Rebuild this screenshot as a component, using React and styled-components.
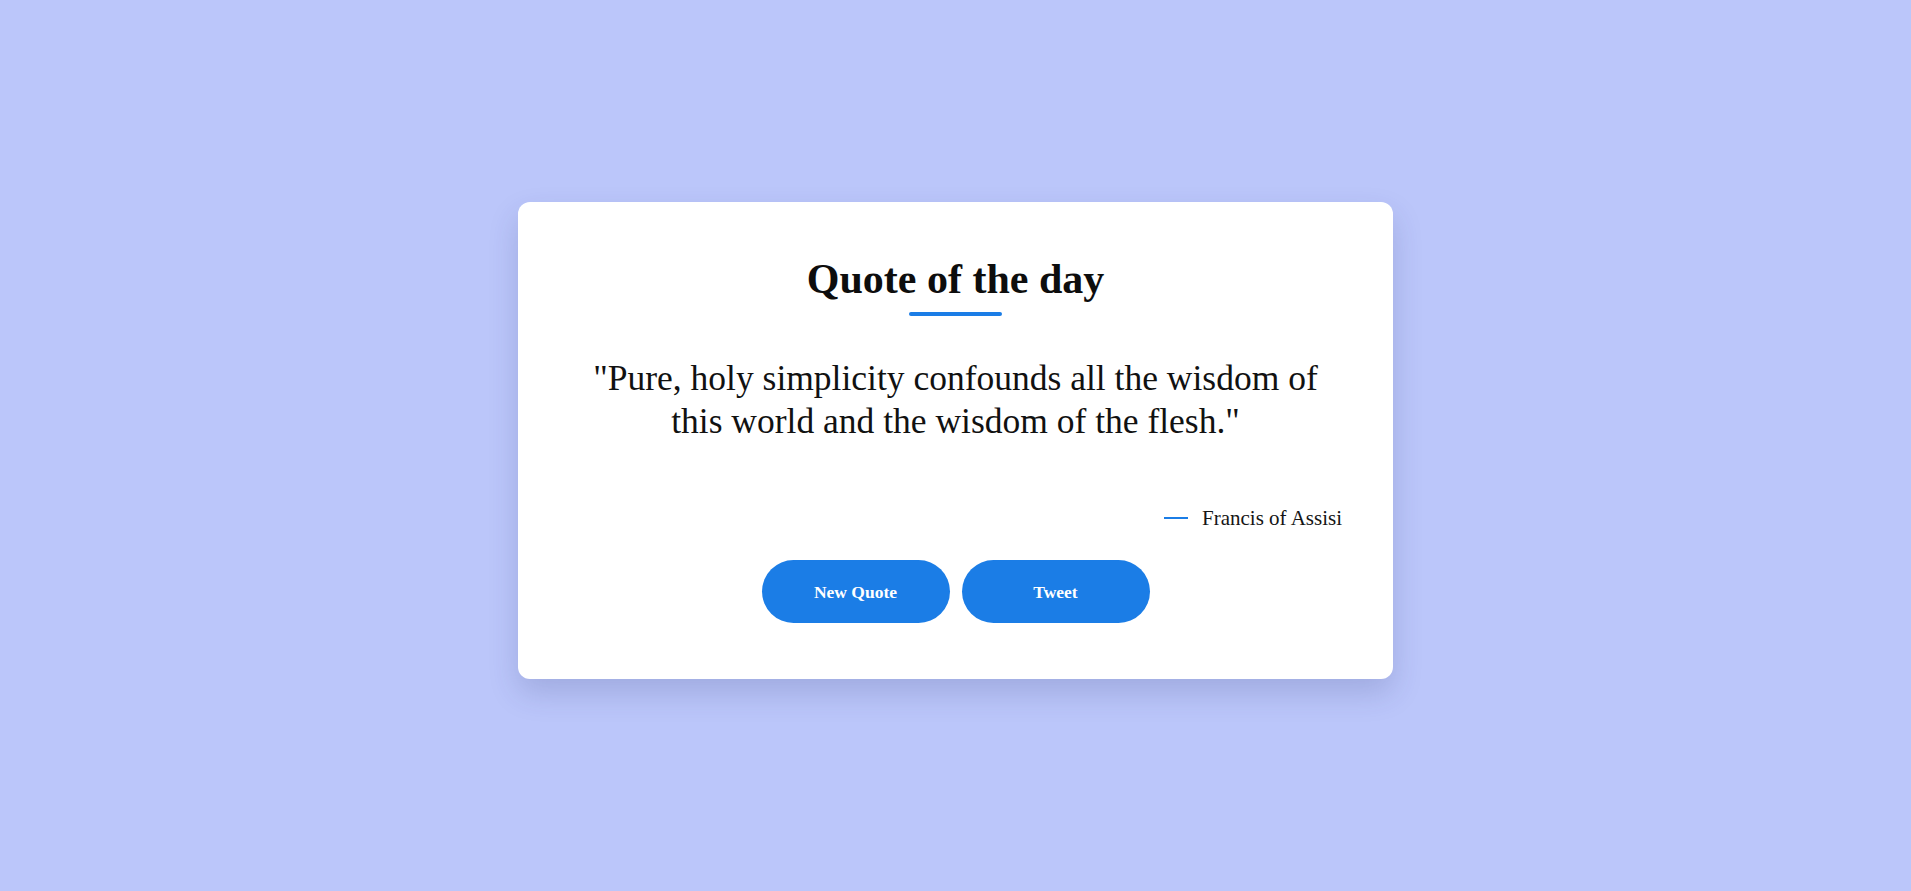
import React from 'react';
import styled, { createGlobalStyle } from 'styled-components';

const GlobalStyle = createGlobalStyle`
  * { box-sizing: border-box; }
  body {
    margin: 0;
    background: #bbc6fa;
    font-family: "Liberation Serif", "Times New Roman", serif;
    color: #111;
  }
`;

const Page = styled.div`
  min-height: 100vh;
  padding-bottom: 11px;
  display: flex;
  align-items: center;
  justify-content: center;
`;

const Card = styled.div`
  width: 875px;
  padding: 52px 51px 56px;
  background: #fff;
  border-radius: 12px;
  box-shadow: 0 14px 30px rgba(40, 50, 110, 0.18);
  display: flex;
  flex-direction: column;
  align-items: center;
`;

const Title = styled.h1`
  margin: 0;
  font-size: 42px;
  line-height: 50px;
  font-weight: 700;
  color: #0d0d0d;
`;

const Underline = styled.div`
  width: 93px;
  height: 4px;
  margin-top: 8px;
  border-radius: 2px;
  background: #1b7de6;
`;

const QuoteText = styled.p`
  margin: 41px 0 0;
  font-size: 35.5px;
  line-height: 43px;
  text-align: center;
  color: #111;
`;

const Author = styled.div`
  align-self: stretch;
  margin-top: 62px;
  display: flex;
  justify-content: flex-end;
  align-items: center;
  gap: 14px;
  font-size: 21px;
  line-height: 27px;
  font-weight: 500;
  color: #151515;
`;

const Dash = styled.span`
  width: 24px;
  height: 2px;
  background: #1b7de6;
`;

const Actions = styled.div`
  margin-top: 28px;
  display: flex;
  gap: 12px;
`;

const Button = styled.button`
  width: 188px;
  height: 63px;
  padding-top: 3px;
  border: none;
  border-radius: 32px;
  background: #1b7de6;
  color: #fff;
  font-family: inherit;
  font-size: 17.5px;
  font-weight: 700;
  cursor: pointer;
`;

export default function App() {
  return (
    <>
      <GlobalStyle />
      <Page>
        <Card>
          <Title>Quote of the day</Title>
          <Underline />
          <QuoteText>
            "Pure, holy simplicity confounds all the wisdom of
            <br />
            this world and the wisdom of the flesh."
          </QuoteText>
          <Author>
            <Dash />
            <span>Francis of Assisi</span>
          </Author>
          <Actions>
            <Button>New Quote</Button>
            <Button>Tweet</Button>
          </Actions>
        </Card>
      </Page>
    </>
  );
}
